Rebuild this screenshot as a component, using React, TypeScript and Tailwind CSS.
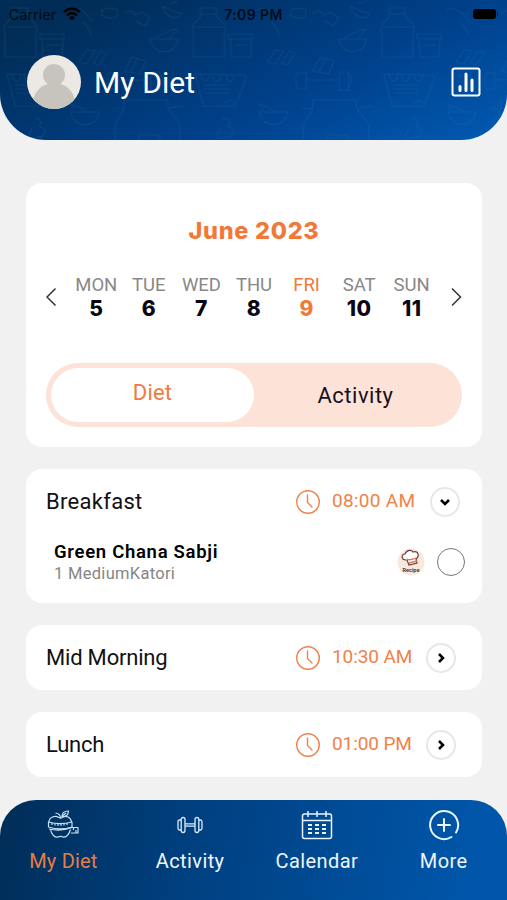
import type { ReactNode } from "react";

const days = [
  { name: "MON", date: 5 },
  { name: "TUE", date: 6 },
  { name: "WED", date: 7 },
  { name: "THU", date: 8 },
  { name: "FRI", date: 9, selected: true },
  { name: "SAT", date: 10 },
  { name: "SUN", date: 11 },
];

function FoodPattern() {
  return (
    <svg className="absolute inset-0 h-full w-full" fill="none">
      <defs>
        <pattern id="food" width="188.5" height="140" patternUnits="userSpaceOnUse">
          <g fill="none" stroke="#2f86b8" strokeOpacity="0.14" strokeWidth="1.2" strokeLinejoin="round">
            <path d="M12 8h16v6H12zM13 14c0 6-9 7-9 15 0 4 2 5 1 9v19h31V38c-1-4 1-5 1-9 0-8-9-9-9-15M6 27h29" />
            <path d="M40 34h24v5H40zM42 39l1 18h19l1-18M46 45h13" />
            <path d="M69 10c9-4 17 2 24 12M83 22c4 4 7 7 8 14M102 11c3-5 9-1 12-3 4 1 5 6 2 9-5 2-11 1-14-2zM124 14c4-5 10-3 11 1l7-3 8 6-5 8-9-5M162 6c7 3 15 8 20 7-3 7-15 7-20-7zM170 4l8-3" />
            <path d="M150 39h28c-1 16-25 18-28 0zM156 39c4-7 12-5 15-9l6-1-7 9M79 62l8-12 8 1-8 13zM93 63l8-12 6 2-8 12zM124 71l8-14 14 4-6 13zM131 71l7-13" />
            <path d="M7 74l49 1c4 4-1 6 0 8l-9 23H15zM12 75c2 8 7 9 9 0M24 75c2 8 7 9 9 0M37 75c2 8 7 9 9 0M15 85h26M15 89h26M16 93h25M36 103l6-3 6 4" />
            <path d="M109 73h9v16h-9c-2-5-2-11 0-16zM118 80h33M151 72h9v18h-9zM160 74c4 4 4 9 0 14" />
            <path d="M71 112h28c-1 16-25 18-28 0zM75 110l-4-6 8 3 8 5M124 100h44v7c2 8 11 10 12 20v13M124 100v8c-2 8-8 11-9 20v12M113 108l11 1M168 108l15-2M139 140v-5h21v5" />
            <path d="M34 119c6-2 9 3 5 7l6 3c1 4-2 7-5 9M32 128l-4 8M29 139l15-3" />
          </g>
        </pattern>
      </defs>
      <rect width="507" height="140" fill="url(#food)" />
    </svg>
  );
}

function StatusBar() {
  return (
    <div className="grid h-7 grid-cols-3 items-center px-[9px] font-['Inter',sans-serif] text-[14px] text-black/80">
      <div className="flex items-center gap-[7px]">
        <span className="tracking-[0.2px]">Carrier</span>
        <svg width="18" height="14" viewBox="0 0 18 14" fill="none" stroke="#000" strokeWidth="2.6">
          <path d="M1 5.2C5.6 .5 12.4 .5 17 5.2M4 8.3c2.9-2.9 7.1-2.9 10 0" />
          <path d="M9 13.5 5.9 10.5c1.9-1.7 4.3-1.7 6.2 0z" fill="#000" stroke="none" />
        </svg>
      </div>
      <span className="text-center font-semibold tracking-[0.4px] whitespace-nowrap">7:09 PM</span>
      <div className="flex items-center justify-end gap-px">
        <span className="h-[10px] w-[23px] rounded-[3px] bg-black" />
        <span className="h-1 w-px bg-black/60" />
      </div>
    </div>
  );
}

function Header() {
  return (
    <header className="relative h-[140px] overflow-hidden rounded-b-[46px] bg-[linear-gradient(155deg,#012c55_10%,#00408a_60%,#0057ae_95%)]">
      <FoodPattern />
      <div className="relative">
        <StatusBar />
        <div className="mt-[27px] flex items-center pr-[26px] pl-[27px]">
          <svg width="54" height="54" viewBox="0 0 54 54">
            <clipPath id="avatar">
              <circle cx="27" cy="27" r="27" />
            </clipPath>
            <g clipPath="url(#avatar)">
              <rect width="54" height="54" fill="#ece9e5" />
              <circle cx="27" cy="20" r="11" fill="#c7c4bd" />
              <ellipse cx="27" cy="48" rx="21" ry="20" fill="#c7c4bd" />
            </g>
          </svg>
          <h1 className="ml-[13px] text-[30px] tracking-[0.1px] text-white">My Diet</h1>
          <svg className="ml-auto" width="30" height="30" viewBox="0 0 30 30" fill="none" stroke="#fff">
            <rect x="1.5" y="1.5" width="27" height="27" rx="2" strokeWidth="2" />
            <path d="M9 19.500v4M15 7v16.500M21 13v10.500" strokeWidth="3" strokeLinecap="round" />
          </svg>
        </div>
      </div>
    </header>
  );
}

function Arrow({ d }: { d: string }) {
  return (
    <button className="cursor-pointer">
      <svg width="12" height="20" viewBox="0 0 12 20" fill="none" stroke="#333" strokeWidth="1.5">
        <path d={d} />
      </svg>
    </button>
  );
}

function WeekCard() {
  return (
    <section className="h-[264px] rounded-2xl bg-white px-5 pt-8">
      <h2 className="text-center font-['Inter',sans-serif] text-[23.5px] leading-8 font-extrabold tracking-[0.7px] text-[#f37838]">
        June 2023
      </h2>
      <div className="mt-[26px] flex items-center justify-between">
        <Arrow d="M9.500 1.500 1 10l8.500 8.500" />
        <div className="grid w-[368px] grid-cols-7">
          {days.map((day) => (
            <div key={day.name} className={`text-center ${day.selected ? "text-[#f37838]" : "text-[#888]"}`}>
              <div className="text-[18.5px] leading-6">{day.name}</div>
              <div
                className={`font-['Inter',sans-serif] text-[21px] leading-6 font-extrabold tracking-[0.4px] ${day.selected ? "" : "text-[#0a0614]"}`}
              >
                {day.date}
              </div>
            </div>
          ))}
        </div>
        <Arrow d="M2 1.500 10.500 10 2 18.500" />
      </div>
      <div className="mt-[42px] grid h-16 grid-cols-2 rounded-full bg-[#fde3d7] p-[5px] text-[22px]">
        <button className="cursor-pointer rounded-full bg-white pb-[5px] tracking-[0.2px] text-[#ee7b42]">Diet</button>
        <button className="cursor-pointer tracking-[0.5px] text-[#17101e]">Activity</button>
      </div>
    </section>
  );
}

type MealProps = {
  name: string;
  time: string;
  open?: boolean;
  children?: ReactNode;
};

function Meal({ name, time, open, children }: MealProps) {
  return (
    <section className="rounded-2xl bg-white pl-5">
      <div className="flex h-[65px] items-center">
        <h3 className={`w-[249px] text-[22px] text-[#111] ${open ? "tracking-[0.3px]" : "tracking-[-0.2px]"}`}>
          {name}
        </h3>
        <svg width="26" height="26" viewBox="0 0 26 26" fill="none" stroke="#f08249" strokeWidth="1.4">
          <circle cx="13" cy="13" r="11.3" />
          <path d="M12.500 6v7.500l4.500 4.500" strokeLinecap="round" />
        </svg>
        <span
          className={`ml-[11px] text-[19px] whitespace-nowrap text-[#f08249] ${open ? "w-[98px] tracking-[0.3px]" : "w-[94px] tracking-[-0.1px]"}`}
        >
          {time}
        </span>
        <button className="flex size-[30px] cursor-pointer items-center justify-center rounded-full border-2 border-[#e7e7e7]">
          <svg
            className={open ? "rotate-90" : ""}
            width="10"
            height="12"
            viewBox="0 0 10 12"
            fill="none"
            stroke="#000"
            strokeWidth="2.5"
          >
            <path d="m3 2 4 4-4 4" />
          </svg>
        </button>
      </div>
      {children}
    </section>
  );
}

function RecipeBadge() {
  return (
    <svg width="28" height="28" viewBox="0 0 28 28">
      <circle cx="14" cy="14" r="13.5" fill="#fbe8dc" />
      <path
        d="M9 12c-5 0-5-6-1-6 2-5 7-4 8-2 5-2 7 4 3 7l1 4-8 2-2-5z"
        fill="#fff"
        stroke="#693e38"
        strokeWidth="1.2"
      />
      <path d="M10 11c3 2 6 0 9-1M12 15l8-2" fill="none" stroke="#d87858" strokeWidth="1.3" />
      <text x="14" y="23.500" textAnchor="middle" fontSize="5.500" fontWeight="700" fill="#39424b">
        Recipe
      </text>
    </svg>
  );
}

function AppleIcon() {
  return (
    <svg width="32" height="30" viewBox="0 0 32 30" fill="none" stroke="#c9e0f4" strokeWidth="1.2" strokeLinejoin="round">
      <path d="M2 12c0-5 6-7 10-4.500 1 .7 2 .7 3 0C19 5 24 7 24.500 12" />
      <path d="M3.500 19.500c.8 4 3.500 8.500 7.500 7.500 2-.8 3.500-.8 5 0 3.500 1 6.500-3.500 7.500-7.500" />
      <path d="M13.500 8c0-2.500-2-4.500-5-5M15 6.500c0-3.500 2.500-5.500 6.500-5.500 0 4-2.500 6-6.500 5.500zM15.500 6l3.500-3" />
      <path d="M1.500 12c7 2 16 2 23.500 0v5c-7.500 2.500-16 2.500-23.500 0zM2 19c8 2 15 1.500 23-1.500h6V23h-7" />
      <path d="M5 13v2M8 13.500v2M11 14v2M14 14v2M17 13.500v2M20 13v2M26.500 17.500V20M29 20v3" />
    </svg>
  );
}

function DumbbellIcon() {
  return (
    <svg width="26" height="30" viewBox="0 0 26 30" fill="none" stroke="#d9ebfa" strokeWidth="1.3">
      <rect x="4.2" y="7.5" width="3.8" height="15" rx="1.9" />
      <rect x="18" y="7.5" width="3.8" height="15" rx="1.9" />
      <path d="M4 10H2.500q-1.500 0-1.500 2v6q0 2 1.500 2H4M22 10h1.500q1.500 0 1.500 2v6q0 2-1.500 2H22M8 13.800h10M8 16.200h10" />
    </svg>
  );
}

function CalendarIcon() {
  return (
    <svg width="32" height="30" viewBox="0 0 32 30" fill="none" stroke="#e8f4ff" strokeWidth="1.5">
      <rect x="1.5" y="4" width="29" height="24.5" rx="2" />
      <path d="M1.500 10.500h29M7 1v6M16 1v6M25 1v6" />
      <path d="M7 15h4M14 15h4M21 15h4M7 19h4M14 19h4M21 19h4M7 23h4M14 23h4M21 23h4" strokeWidth="2" />
    </svg>
  );
}

function MoreIcon() {
  return (
    <svg width="32" height="32" viewBox="0 0 32 32" fill="none" stroke="#e8f4ff" strokeWidth="2" strokeLinecap="round">
      <path d="M23.500 28a14 14 0 1 1 4.500-4.500M16 10v12M10 16h12" />
    </svg>
  );
}

const tabs = [
  { label: "My Diet", icon: <AppleIcon />, active: true },
  { label: "Activity", icon: <DumbbellIcon /> },
  { label: "Calendar", icon: <CalendarIcon /> },
  { label: "More", icon: <MoreIcon /> },
];

function BottomNav() {
  return (
    <nav className="grid h-[100px] grid-cols-4 rounded-t-[36px] bg-[linear-gradient(100deg,#012d58_0%,#004080_38%,#0056aa_92%)] pt-[9px]">
      {tabs.map((tab) => (
        <button key={tab.label} className="flex cursor-pointer flex-col items-center">
          <span className="flex h-8 items-center">{tab.icon}</span>
          <span
            className={`mt-[5px] text-[20px] leading-[30px] ${tab.active ? "tracking-[0.2px] text-[#e87c45]" : "tracking-[0.4px] text-[#eef6ff]"}`}
          >
            {tab.label}
          </span>
        </button>
      ))}
    </nav>
  );
}

export default function App() {
  return (
    <div className="flex h-[900px] w-[507px] flex-col overflow-hidden bg-[#f1f1f1] font-['Roboto',sans-serif]">
      <Header />
      <main className="flex flex-1 flex-col gap-[22px] pt-[43px] pr-[25px] pl-[26px]">
        <WeekCard />
        <Meal name="Breakfast" time="08:00 AM" open>
          <div className="flex h-[69px] items-start pr-[17px] pl-2">
            <div className="pt-[7px]">
              <div className="text-[18.5px] leading-[22px] font-semibold tracking-[0.7px] text-black">
                Green Chana Sabji
              </div>
              <div className="text-[16.5px] leading-[22px] tracking-[0.3px] text-[#858585]">1 MediumKatori</div>
            </div>
            <div className="mt-[14px] ml-auto flex items-center gap-3">
              <RecipeBadge />
              <span className="size-7 rounded-full border-[1.5px] border-[#777]" />
            </div>
          </div>
        </Meal>
        <Meal name="Mid Morning" time="10:30 AM" />
        <Meal name="Lunch" time="01:00 PM" />
      </main>
      <BottomNav />
    </div>
  );
}
